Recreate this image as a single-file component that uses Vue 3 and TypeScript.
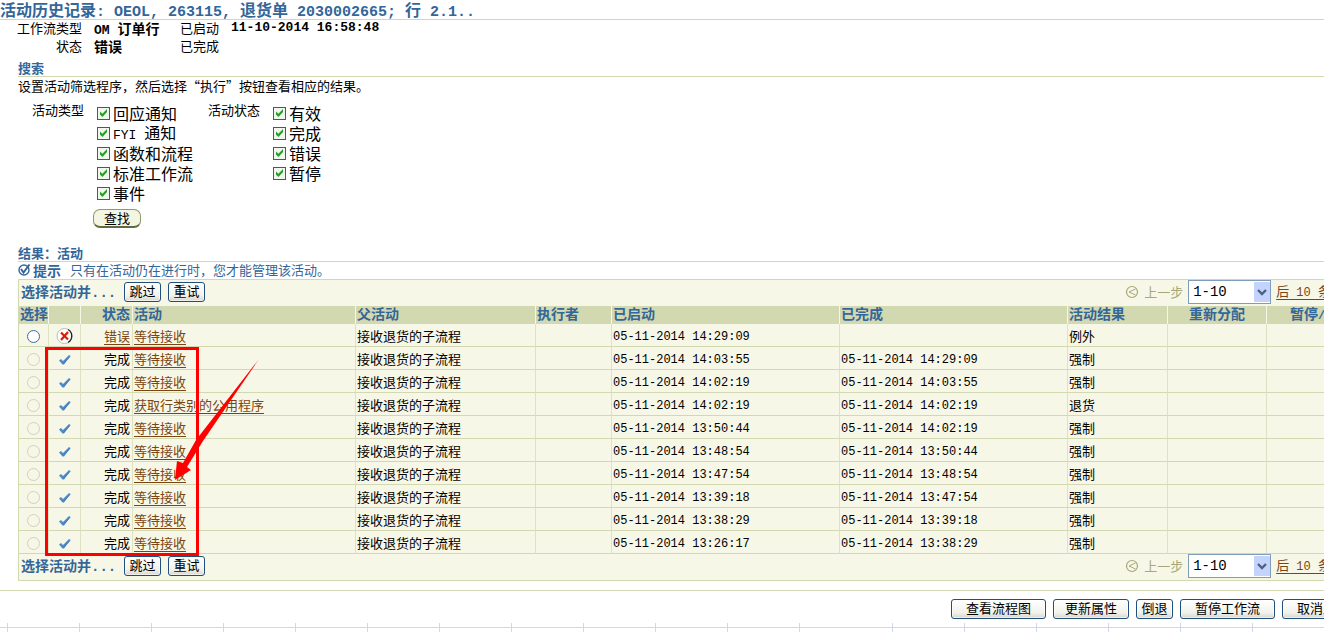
<script setup lang="ts">
import { ref } from 'vue'

interface Activity {
  status: string
  name: string
  started: string
  finished: string
  result: string
  failed?: boolean
}

const parent = '接收退货的子流程'

const activities: Activity[] = [
  { status: '错误', name: '等待接收', started: '05-11-2014 14:29:09', finished: '', result: '例外', failed: true },
  { status: '完成', name: '等待接收', started: '05-11-2014 14:03:55', finished: '05-11-2014 14:29:09', result: '强制' },
  { status: '完成', name: '等待接收', started: '05-11-2014 14:02:19', finished: '05-11-2014 14:03:55', result: '强制' },
  { status: '完成', name: '获取行类别的公用程序', started: '05-11-2014 14:02:19', finished: '05-11-2014 14:02:19', result: '退货' },
  { status: '完成', name: '等待接收', started: '05-11-2014 13:50:44', finished: '05-11-2014 14:02:19', result: '强制' },
  { status: '完成', name: '等待接收', started: '05-11-2014 13:48:54', finished: '05-11-2014 13:50:44', result: '强制' },
  { status: '完成', name: '等待接收', started: '05-11-2014 13:47:54', finished: '05-11-2014 13:48:54', result: '强制' },
  { status: '完成', name: '等待接收', started: '05-11-2014 13:39:18', finished: '05-11-2014 13:47:54', result: '强制' },
  { status: '完成', name: '等待接收', started: '05-11-2014 13:38:29', finished: '05-11-2014 13:39:18', result: '强制' },
  { status: '完成', name: '等待接收', started: '05-11-2014 13:26:17', finished: '05-11-2014 13:38:29', result: '强制' },
]

const types = ref([
  { latin: '', label: '回应通知', on: true },
  { latin: 'FYI ', label: '通知', on: true },
  { latin: '', label: '函数和流程', on: true },
  { latin: '', label: '标准工作流', on: true },
  { latin: '', label: '事件', on: true },
])

const states = ref([
  { label: '有效', on: true },
  { label: '完成', on: true },
  { label: '错误', on: true },
  { label: '暂停', on: true },
])

const actions = [
  { label: '查看流程图', size: 'large' },
  { label: '更新属性', size: 'medium' },
  { label: '倒退', size: 'small' },
  { label: '暂停工作流', size: 'large' },
  { label: '取消工作流', size: 'large' },
]

const range = ref('1-10')
const bars = ['top', 'bottom']
</script>

<template>
  <main class="page" lang="zh-CN">
    <h1 class="title">活动历史记录<span class="mono">: OEOL, 263115, </span>退货单<span class="mono"> 2030002665; </span>行<span class="mono"> 2.1..</span></h1>

    <dl class="info">
      <dt>工作流类型</dt>
      <dd><span class="mono">OM </span>订单行</dd>
      <dt class="second">已启动</dt>
      <dd class="mono">11-10-2014 16:58:48</dd>
      <dt>状态</dt>
      <dd>错误</dd>
      <dt class="second">已完成</dt>
      <dd></dd>
    </dl>

    <div class="wide">
      <h2 class="section">搜索</h2>
      <p class="hint">设置活动筛选程序，然后选择“执行”按钮查看相应的结果。</p>

      <form class="filters" @submit.prevent>
        <span class="filter-label">活动类型</span>
        <div class="checks">
          <label v-for="t in types" :key="t.label" class="check">
            <input v-model="t.on" type="checkbox" /><span><span v-if="t.latin" class="mono">{{ t.latin }}</span>{{ t.label }}</span>
          </label>
        </div>
        <span class="filter-label">活动状态</span>
        <div class="checks">
          <label v-for="s in states" :key="s.label" class="check">
            <input v-model="s.on" type="checkbox" /><span>{{ s.label }}</span>
          </label>
        </div>
        <button class="find" type="submit">查找</button>
      </form>

      <h2 class="section">结果：活动</h2>
      <p class="tip">
        <svg width="14" height="14" viewBox="0 0 14 14" aria-hidden="true">
          <circle cx="6" cy="7" r="5" fill="#fff" stroke="#336699" stroke-width="1.4" />
          <path d="M3 6l2.500 3.500L11.500 1.500" fill="none" stroke="#336699" stroke-width="2" />
        </svg>
        <strong>提示</strong>
        <span>只有在活动仍在进行时，您才能管理该活动。</span>
      </p>

      <div class="panel">
        <template v-for="bar in bars" :key="bar">
          <table v-if="bar === 'bottom'" class="grid">
            <colgroup>
              <col class="c-pick" /><col class="c-icon" /><col class="c-status" /><col class="c-name" />
              <col class="c-parent" /><col class="c-who" /><col class="c-time" /><col class="c-time" />
              <col class="c-result" /><col class="c-assign" /><col />
            </colgroup>
            <thead>
              <tr>
                <th>选择</th>
                <th></th>
                <th class="right">状态</th>
                <th>活动</th>
                <th>父活动</th>
                <th>执行者</th>
                <th>已启动</th>
                <th>已完成</th>
                <th>活动结果</th>
                <th class="center">重新分配</th>
                <th class="center">暂停<span class="mono">/</span>恢复</th>
              </tr>
            </thead>
            <tbody>
              <tr v-for="(a, i) in activities" :key="i">
                <td class="center">
                  <input class="radio" type="radio" name="activity" :aria-label="a.name" :disabled="!a.failed" />
                </td>
                <td class="center">
                  <svg v-if="a.failed" class="mark" width="18" height="18" viewBox="0 0 18 18" aria-hidden="true">
                    <circle cx="8.500" cy="9" r="7.500" fill="#fff" stroke="#bbb" />
                    <path d="M12 2.500a7.500 7.500 0 0 1 0 13" fill="none" stroke="#222" stroke-width="1.300" />
                    <path d="M5 5.500l7 7M12 5L5 13" stroke="#dd1c00" stroke-width="2.200" />
                  </svg>
                  <svg v-else class="mark" width="14" height="14" viewBox="0 0 14 14" aria-hidden="true">
                    <path d="M1 8.500L3 7L5 9L11 3L12.500 4L6 12.500H4.500z" fill="#4f8ccb" />
                    <path d="M5.200 11.500L12 4.500" stroke="#3a6ea8" stroke-width="0.800" />
                  </svg>
                </td>
                <td class="right"><a v-if="a.failed" href="#">{{ a.status }}</a><template v-else>{{ a.status }}</template></td>
                <td><a href="#">{{ a.name }}</a></td>
                <td>{{ parent }}</td>
                <td></td>
                <td class="mono">{{ a.started }}</td>
                <td class="mono">{{ a.finished }}</td>
                <td>{{ a.result }}</td>
                <td></td>
                <td></td>
              </tr>
            </tbody>
          </table>

          <div class="bar">
            <strong class="bar-label">选择活动并<span class="mono">...</span></strong>
            <button class="btn small" type="button">跳过</button>
            <button class="btn small" type="button">重试</button>
            <div class="pager">
              <svg width="14" height="14" viewBox="0 0 14 14" aria-hidden="true">
                <circle cx="7" cy="7" r="5.500" fill="none" stroke="#a5a878" stroke-width="1.200" />
                <path d="M10.500 4L4 7l6.500 3" fill="none" stroke="#a5a878" />
              </svg>
              <span class="prev">上一步</span>
              <span class="picker">
                <select v-model="range" aria-label="记录范围">
                  <option>1-10</option>
                </select>
                <svg class="drop" width="16" height="20" viewBox="0 0 16 20" aria-hidden="true">
                  <rect width="16" height="20" rx="1" fill="#c3d3fb" />
                  <path d="M4 8l4 4 4-4" fill="none" stroke="#4d6185" stroke-width="2.400" />
                </svg>
              </span>
              <a href="#">后<span class="mono"> 10 </span>条</a>
            </div>
          </div>
        </template>
      </div>
    </div>

    <div class="footer">
      <div class="actions">
        <button v-for="b in actions" :key="b.label" class="btn" :class="b.size" type="button">{{ b.label }}</button>
      </div>
    </div>

    <div class="sheet" aria-hidden="true">
      <i v-for="n in 20" :key="n" :class="{ first: n === 1, broad: n === 13 }"></i>
    </div>

    <svg class="callout" width="220" height="212" viewBox="44 346 220 212" aria-hidden="true">
      <rect x="46.500" y="348.500" width="151" height="206" fill="none" stroke="#f00" stroke-width="3" />
      <path d="M259 359L196 440L183 463L177 461L175 480L191 470L187 467L203 441z" fill="#f00" />
    </svg>
  </main>
</template>

<style>
body {
  margin: 0;
  background: #fff;
}
</style>

<style scoped>
.page {
  position: relative;
  overflow: hidden;
  color: #000;
  font: 13px/18px "Noto Sans CJK SC", "Liberation Sans", sans-serif;
}

.mono {
  font-family: "Liberation Mono", monospace;
  font-size: 12px;
  white-space: pre;
}

h1, h2, p, dl, dd {
  margin: 0;
}

a {
  color: #7a4512;
  text-decoration: underline;
  text-underline-offset: 3px;
}

.title {
  height: 19px;
  border-bottom: 1px solid #d2d8b0;
  color: #336699;
  font-size: 16px;
  line-height: 19px;
  white-space: nowrap;
}

.title .mono {
  font-size: 15px;
}

.info {
  display: grid;
  grid-template-columns: 82px 74px 39px 1fr;
  grid-auto-rows: 18px;
  column-gap: 12px;
  line-height: 16px;
}

.info dt {
  text-align: right;
}

.info .second {
  text-align: left;
}

.info dd {
  font-size: 14px;
  font-weight: bold;
  white-space: nowrap;
}

.info .mono {
  font-size: 13px;
  white-space: pre;
}

.wide {
  width: calc(100% + 35px);
  margin-left: 18px;
}

.section {
  height: 16px;
  padding-top: 4px;
  border-bottom: 1px solid #d2d8b0;
  color: #336699;
  font-size: 13px;
  line-height: 16px;
}

.filters {
  display: grid;
  grid-template-columns: 66px 98px 52px 1fr;
  column-gap: 13px;
  align-items: start;
  padding: 7px 0 13px;
}

.filter-label {
  line-height: 16px;
  text-align: right;
}

.checks {
  padding-top: 1px;
}

.check {
  display: flex;
  align-items: center;
  gap: 3px;
  height: 20px;
  font-size: 16px;
  line-height: 20px;
  white-space: nowrap;
}

.check .mono {
  font-size: 13px;
  line-height: 16px;
}

.check input {
  appearance: none;
  display: grid;
  width: 13px;
  height: 13px;
  margin: 0;
  border: 1px solid #2a6096;
  background: #f4f4f1;
}

.check input:checked::after {
  content: "";
  width: 11px;
  height: 11px;
  background: #21a121;
  clip-path: polygon(18% 36%, 40% 56%, 82% 14%, 82% 42%, 40% 86%, 18% 64%);
}

.find {
  grid-column: 2;
  width: 48px;
  height: 19px;
  margin: 6px 0 0 -4px;
  padding: 0;
  border: 1px solid #8d9a6b;
  border-bottom: 2px solid #5f6b3c;
  border-radius: 7px;
  background: #f4f6e2;
  font: inherit;
  line-height: 16px;
}

.tip {
  display: flex;
  align-items: center;
  box-sizing: border-box;
  height: 17px;
  padding-bottom: 2px;
  color: #336699;
}

.tip strong {
  margin: 0 9px 0 1px;
  font-size: 14px;
}

.panel {
  border: 1px solid #d2d8b0;
  background: #f7f7e7;
}

.bar {
  display: flex;
  align-items: center;
  box-sizing: border-box;
  height: 26px;
  padding: 0 45px 2px 2px;
}

.bar-label {
  width: 103px;
  color: #336699;
  font-size: 14px;
}

.bar-label .mono {
  font-size: 14px;
}

.bar .btn + .btn {
  margin-left: 7px;
}

.pager {
  display: flex;
  align-items: center;
  gap: 5px;
  margin-left: auto;
  white-space: nowrap;
}

.prev {
  color: #a5a878;
}

.picker {
  position: relative;
  display: flex;
}

.picker select {
  appearance: none;
  width: 83px;
  height: 24px;
  padding: 0 4px;
  border: 1px solid #7f9db9;
  border-radius: 0;
  background: #fff;
  color: #000;
  font: 14px "Liberation Mono", monospace;
}

.drop {
  position: absolute;
  top: 2px;
  right: 1px;
  pointer-events: none;
}

.btn {
  height: 20px;
  padding: 0 0 3px;
  border: 1px solid #1f4f7d;
  border-radius: 3px;
  background: linear-gradient(#fff, #f2f2ec 70%, #d8d5cb);
  box-shadow: inset 0 0 0 1px #ffffff99;
  color: #000;
  font: 13px/15px "Noto Sans CJK SC", "Liberation Sans", sans-serif;
}

.small {
  width: 37px;
}

.medium {
  width: 76px;
}

.large {
  width: 95px;
}

.grid {
  width: 100%;
  border-spacing: 0;
  table-layout: fixed;
}

.c-pick {
  width: 29px;
}

.c-icon {
  width: 32px;
}

.c-status {
  width: 52px;
}

.c-name {
  width: 223px;
}

.c-parent {
  width: 180px;
}

.c-who {
  width: 76px;
}

.c-time {
  width: 228px;
}

.c-result {
  width: 100px;
}

.c-assign {
  width: 99px;
}

th, td {
  box-sizing: border-box;
  padding: 0 1px;
  border-left: 1px solid #dde2c2;
  text-align: left;
  white-space: nowrap;
}

th:first-child, td:first-child {
  border-left: 0;
}

th {
  height: 18px;
  border-left-color: #f7f7e7;
  background: #d2d8b0;
  color: #336699;
  font-size: 14px;
  line-height: 14px;
  vertical-align: top;
}

td {
  height: 23px;
  padding-top: 2px;
  border-bottom: 1px solid #d2d8b0;
  line-height: 20px;
}

td.mono {
  padding-top: 4px;
  line-height: 18px;
}

th.right, td.right {
  padding-right: 2px;
  text-align: right;
}

th.center, td.center {
  text-align: center;
}

.mark, .radio {
  display: block;
  margin: 0 auto;
}

.radio {
  appearance: none;
  width: 13px;
  height: 13px;
  border: 1px solid #3d6c9c;
  border-radius: 50%;
  background: #fff;
}

.radio:disabled {
  border-color: #d3d0be;
  background: #f7f7e7;
}

.footer {
  margin-top: 9px;
  padding-top: 8px;
  border-top: 1px solid #d2d8b0;
}

.actions {
  display: flex;
  justify-content: flex-end;
  gap: 7px;
  width: calc(100% + 53px);
}

.sheet {
  display: flex;
  height: 9px;
  margin-top: 4px;
  background: linear-gradient(#d0d7e5, #d0d7e5) 0 4px / 100% 1px no-repeat;
}

.sheet i {
  box-sizing: border-box;
  flex: none;
  width: 72px;
  border-right: 1px solid #d0d7e5;
}

.sheet .first {
  width: 8px;
}

.sheet .broad {
  width: 93px;
}

.callout {
  position: absolute;
  top: 346px;
  left: 44px;
  pointer-events: none;
}
</style>
